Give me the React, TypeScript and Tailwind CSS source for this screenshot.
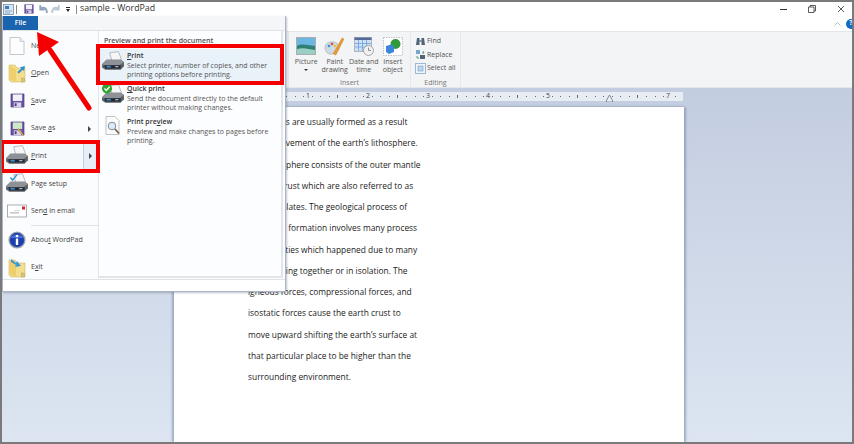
import type { ReactNode } from "react"

const docLines = [
  "Mountains are usually formed as a result",
  "of the movement of the earth’s lithosphere.",
  "The lithosphere consists of the outer mantle",
  "and the crust which are also referred to as",
  "tectonic plates. The geological process of",
  "mountain formation involves many process",
  "and activities which happened due to many",
  "forces acting together or in isolation. The",
  "igneous forces, compressional forces, and",
  "isostatic forces cause the earth crust to",
  "move upward shifting the earth’s surface at",
  "that particular place to be higher than the",
  "surrounding environment.",
]

function Floppy({ size = 16, pencil = false }: { size?: number; pencil?: boolean }) {
  return (
    <svg width={size} height={size} viewBox="0 0 16 16">
      <path d="M1 1h14v14H1z" fill="#6a4fa3" stroke="#4a3a80" strokeWidth="0.6" />
      <rect x="3" y="1.5" width="10" height="7" fill={pencil ? "#cfe8c8" : "#f1f1f8"} />
      <rect x="4" y="10" width="8" height="5" fill="#d8d4e8" />
      <rect x="5" y="11" width="2" height="3" fill="#4a3a80" />
      {pencil && <path d="M9 8l5.5 6.5-1.2.6L8 9z" fill="#e8b84a" stroke="#8a6a20" strokeWidth="0.4" />}
    </svg>
  )
}

function PrinterIcon({ check = false, paperCheck = false, size = 24 }: { check?: boolean; paperCheck?: boolean; size?: number }) {
  return (
    <svg width={size} height={size} viewBox="0 0 22 22">
      <path d="M8 2.5l8-1 3 8-9 1z" fill="#f6f6f6" stroke="#9a9a9a" strokeWidth="0.6" />
      <path d="M1 13l4-4h13l3 2v4l-3 3H4l-3-2z" fill="#5c6065" />
      <path d="M1 13l4-4h13l3 2-4 3H3z" fill="#8e9196" />
      <path d="M3 14h15v3H4z" fill="#24282d" />
      <rect x="5" y="14.5" width="4" height="1.6" fill="#3b8fd0" />
      <rect x="13" y="14.8" width="3" height="1" fill="#9fd0ef" />
      {check && (
        <g>
          <circle cx="5.5" cy="5" r="4.6" fill="#2ea52e" />
          <path d="M3.2 5l1.7 1.8 3-3.4" fill="none" stroke="#fff" strokeWidth="1.3" />
        </g>
      )}
      {paperCheck && <path d="M5 5l2 2.4 4-5" fill="none" stroke="#2a8fd0" strokeWidth="1.3" />}
    </svg>
  )
}

function FolderIcon({ exit = false }: { exit?: boolean }) {
  return (
    <svg width="19" height="20" viewBox="0 0 19 20">
      <path d="M1 2h6l2 3h8v14H3l-2-2z" fill="#f2de8c" stroke="#c6ad5a" strokeWidth="0.5" />
      <path d="M1 2l7 4v13l-5-2.5L1 15z" fill="#efcf6c" />
      {exit ? (
        <path d="M3 1l5 4 1-2 4 5-6 1 1-2-5-3z" fill="#3a9ad8" />
      ) : (
        <path d="M17 3l-5 1.2 1.3 1.2-4 3.6 1.5 1.4 4-3.7 1.2 1.3z" fill="#2f8fd6" />
      )}
      <rect x="13.5" y="15" width="3" height="4" fill="#d8c478" stroke="#b79f52" strokeWidth="0.4" />
    </svg>
  )
}

function NewDoc() {
  return (
    <svg width="16" height="18" viewBox="0 0 16 18">
      <path d="M1 .5h10l4 4v13H1z" fill="#fdfdfd" stroke="#b9b9b9" strokeWidth="0.8" />
      <path d="M11 .5v4h4" fill="#ececec" stroke="#b9b9b9" strokeWidth="0.6" />
    </svg>
  )
}

function MailIcon() {
  return (
    <svg width="20" height="14" viewBox="0 0 20 14">
      <rect x="0.5" y="1" width="19" height="12" fill="#fff" stroke="#9a9a9a" strokeWidth="0.8" />
      <rect x="3" y="8" width="9" height="1.6" fill="#c8c8c8" />
      <rect x="7" y="6" width="6" height="1.2" fill="#dedede" />
      <rect x="15" y="2.5" width="3" height="3" fill="#e0202a" />
    </svg>
  )
}

function InfoIcon() {
  return (
    <svg width="18" height="18" viewBox="0 0 18 18">
      <circle cx="9" cy="9" r="8.6" fill="#9ba1aa" />
      <circle cx="9" cy="9" r="7.2" fill="#1c3fae" />
      <path d="M2.5 7a7 5 0 0 1 13 0z" fill="#4a70d6" />
      <circle cx="9" cy="5" r="1.3" fill="#fff" />
      <rect x="7.8" y="7.4" width="2.4" height="6.6" rx="0.4" fill="#fff" />
    </svg>
  )
}

function PreviewIcon() {
  return (
    <svg width="16" height="20" viewBox="0 0 16 20">
      <path d="M1 .5h9l4 4v14H1z" fill="#fcfcfc" stroke="#a9a9a9" strokeWidth="0.7" />
      <circle cx="7" cy="10" r="3.8" fill="#dcecf7" stroke="#7f8a93" strokeWidth="1" />
      <path d="M10 13l4 4.5" stroke="#6a5a4a" strokeWidth="1.6" />
    </svg>
  )
}

function Caret() {
  return <span className="ml-auto mr-[7px] h-0 w-0 border-y-[3px] border-l-[3px] border-y-transparent border-l-[#444]" />
}

function MenuRow({ icon, children, arrow = false }: { icon: ReactNode; children: ReactNode; arrow?: boolean }) {
  return (
    <div className="flex h-[27.6px] shrink-0 items-center">
      <div className="flex w-[28px] shrink-0 justify-center">{icon}</div>
      <span className="whitespace-nowrap text-[7px] text-[#444]">{children}</span>
      {arrow && <Caret />}
    </div>
  )
}

function PanelItem({ icon, title, lines, active = false }: { icon: ReactNode; title: ReactNode; lines: string[]; active?: boolean }) {
  return (
    <div className={`flex h-[33px] items-start ${active ? "bg-[#e9f1f9]" : ""}`}>
      <div className="flex w-[28px] shrink-0 justify-center pt-[1px]">{icon}</div>
      <div className="pt-[2px] text-[7px] leading-[9.2px] text-[#555]">
        <div className="mb-[1px] font-semibold text-[#333]">{title}</div>
        {lines.map((l) => (
          <div key={l} className="whitespace-nowrap">{l}</div>
        ))}
      </div>
    </div>
  )
}

function FileMenu() {
  return (
    <div className="absolute left-0 top-[14px] flex h-[276px] w-[284px] flex-col border border-[#a9b4c6] border-t-0 bg-[#fbfcfd] shadow-[1px_1px_2px_rgba(70,80,100,0.35)]">
      <div className="flex h-[15px] shrink-0 border-b border-[#dfe3e8] bg-[#f5f6f8]">
        <div className="flex w-[35px] items-center justify-center bg-[#1a63ae] text-[7px] font-semibold text-white">File</div>
      </div>
      <div className="flex h-[248px] shrink-0">
        <div className="flex w-[95px] shrink-0 flex-col pt-[1px]">
          <MenuRow icon={<NewDoc />}>New</MenuRow>
          <MenuRow icon={<FolderIcon />}><u>O</u>pen</MenuRow>
          <MenuRow icon={<Floppy size={15} />}><u>S</u>ave</MenuRow>
          <MenuRow icon={<Floppy size={15} pencil />} arrow>Save <u>a</u>s</MenuRow>
          <div className="flex h-[27.6px] shrink-0 items-center bg-[#f6f9fc]">
            <div className="flex w-[28px] shrink-0 justify-center"><PrinterIcon /></div>
            <span className="text-[7px] text-[#444]"><u>P</u>rint</span>
            <div className="ml-auto mr-[2px] flex h-full w-[13px] items-center justify-center border-l border-[#bcd0e6] bg-[#e6eff8]">
              <span className="h-0 w-0 border-y-[3px] border-l-[3px] border-y-transparent border-l-[#444]" />
            </div>
          </div>
          <MenuRow icon={<PrinterIcon paperCheck />}>Pa<u>g</u>e setup</MenuRow>
          <MenuRow icon={<MailIcon />}>Sen<u>d</u> in email</MenuRow>
          <div className="ml-[28px] h-px shrink-0 bg-[#dde1e6]" />
          <MenuRow icon={<InfoIcon />}>Abou<u>t</u> WordPad</MenuRow>
          <MenuRow icon={<FolderIcon exit />}>E<u>x</u>it</MenuRow>
        </div>
        <div className="mb-[1px] flex w-[185px] shrink-0 flex-col border-b-2 border-l border-r-2 border-[#e3e5e8] bg-[#fcfdfe] pt-[5px]">
          <div className="h-[13px] pl-[5px] text-[7px] font-semibold leading-[10px] text-[#555]">Preview and print the document</div>
          <PanelItem
            active
            icon={<PrinterIcon />}
            title={<><u>P</u>rint</>}
            lines={["Select printer, number of copies, and other", "printing options before printing."]}
          />
          <PanelItem
            icon={<PrinterIcon check />}
            title={<><u>Q</u>uick print</>}
            lines={["Send the document directly to the default", "printer without making changes."]}
          />
          <PanelItem
            icon={<PreviewIcon />}
            title={<>Print pre<u>v</u>iew</>}
            lines={["Preview and make changes to pages before", "printing."]}
          />
        </div>
      </div>
      <div className="z-10 flex-1 border-t border-[#dfe3e8] bg-white" />
    </div>
  )
}

function InsertTool({ icon, label, drop = false }: { icon: ReactNode; label: string[]; drop?: boolean }) {
  return (
    <div className="flex w-[29.5px] flex-col items-center">
      <div className="flex h-[20px] items-center">{icon}</div>
      <div className="mt-[2px] text-center text-[7px] leading-[8.2px] text-[#555]">
        {label.map((l) => (
          <div key={l} className="whitespace-nowrap">{l}</div>
        ))}
        {drop && <span className="mx-auto mt-[3px] block h-0 w-0 border-x-[2px] border-t-[2px] border-x-transparent border-t-[#333]" />}
      </div>
    </div>
  )
}

function Ribbon() {
  return (
    <div className="flex h-[57px] shrink-0 border-y border-[#e4e6e9] bg-[#f3f4f6] pl-[286px]">
      <div className="flex w-[123px] flex-col border-x border-[#e6e8eb]">
        <div className="flex flex-1 px-[3px] pt-[4px]">
          <InsertTool
            drop
            label={["Picture"]}
            icon={
              <svg width="20" height="18" viewBox="0 0 20 18">
                <rect width="20" height="18" fill="#a9adb2" />
                <rect x="1" y="1" width="18" height="16" fill="#6ab8e2" />
                <path d="M1 9c5-3 9-1 18 0v8H1z" fill="#2f7f74" />
                <path d="M1 12c6-2 12 0 18 1v4H1z" fill="#9ad0c4" />
              </svg>
            }
          />
          <InsertTool
            label={["Paint", "drawing"]}
            icon={
              <svg width="21" height="20" viewBox="0 0 21 20">
                <path d="M1 12c0-5 5-7 9-6 5 1 6 5 4 8s-5 2-6 4c-3 1-7-2-7-6z" fill="#cfdbe4" stroke="#8d9aa6" strokeWidth="0.5" />
                <circle cx="5" cy="10" r="1.3" fill="#3a8fd0" />
                <circle cx="8" cy="8" r="1.3" fill="#e04a3a" />
                <circle cx="11" cy="10" r="1.3" fill="#e8c33a" />
                <path d="M9 18L18 2l2 1-8 16z" fill="#e89a30" stroke="#b06a10" strokeWidth="0.3" />
              </svg>
            }
          />
          <InsertTool
            label={["Date and", "time"]}
            icon={
              <svg width="20" height="19" viewBox="0 0 20 19">
                <rect x="0.5" y="0.5" width="17" height="14" fill="#cfe0f3" stroke="#8a93a0" strokeWidth="0.6" />
                <rect x="0.5" y="0.5" width="17" height="2.5" fill="#566a9a" />
                <path d="M4.5 3v11M8.5 3v11M12.5 3v11M1 6.5h16M1 10h16" stroke="#5f9ad8" strokeWidth="0.7" />
                <circle cx="14.5" cy="13.5" r="5" fill="#f1f1f1" stroke="#8a8a8a" strokeWidth="0.7" />
                <path d="M14.5 10.5v3h2.5" fill="none" stroke="#666" strokeWidth="0.7" />
              </svg>
            }
          />
          <InsertTool
            label={["Insert", "object"]}
            icon={
              <svg width="20" height="19" viewBox="0 0 20 19">
                <rect x="0.5" y="0.5" width="19" height="18" fill="#fff" stroke="#8a8a8a" strokeWidth="0.5" strokeDasharray="1.5 1" />
                <circle cx="12.5" cy="7" r="5" fill="#2f9a3a" />
                <path d="M3 9l5-1.5 3 1.5v6l-5 2-3-2z" fill="#3a86da" />
              </svg>
            }
          />
        </div>
        <div className="h-[8px] text-center text-[7px] leading-[8px] text-[#777]">Insert</div>
      </div>
      <div className="flex w-[50px] flex-col border-r border-[#e6e8eb]">
        <div className="flex flex-1 flex-col gap-[2px] pl-[4px] pt-[3px] text-[7px] leading-[11.7px] text-[#555]">
          <div className="flex items-center gap-[1px]">
            <svg width="11" height="10" viewBox="0 0 11 10">
              <path d="M1 9l1-7h2.5v7zM6.5 9V2H9l1 7z" fill="#4f6478" />
              <rect x="4" y="4" width="3" height="2" fill="#7f93a6" />
            </svg>
            Find
          </div>
          <div className="flex items-center gap-[1px]">
            <svg width="11" height="11" viewBox="0 0 11 11">
              <path d="M1 1h4v4H1z" fill="#7aa7d0" />
              <path d="M5 6h5v4H5z" fill="#4f6478" />
              <path d="M2 7v2h2M8 2l1 2H7" fill="none" stroke="#2f8f5a" strokeWidth="0.8" />
            </svg>
            Replace
          </div>
          <div className="flex items-center gap-[1px]">
            <svg width="11" height="11" viewBox="0 0 11 11">
              <rect x="0.5" y="0.5" width="10" height="10" fill="none" stroke="#3f7fc0" strokeDasharray="1 1" />
              <rect x="3" y="3" width="5" height="5" fill="#b9d5ef" stroke="#5b93cc" strokeWidth="0.5" />
            </svg>
            Select all
          </div>
        </div>
        <div className="h-[8px] text-center text-[7px] leading-[8px] text-[#777]">Editing</div>
      </div>
    </div>
  )
}

function Ruler() {
  return (
    <div className="relative ml-[171px] mt-[4px] flex h-[9px] w-[510px] shrink-0 bg-[#e8ecf3] pl-[75px]">
      {[0, 1, 2, 3, 4, 5, 6, 7].map((n) => (
        <div key={n} className={`relative flex h-full shrink-0 items-center justify-around ${n === 7 ? "w-[15px]" : "w-[60px]"}`}>
          {n > 0 && n !== 6 && (
            <span className="absolute left-[-2px] top-[-1px] text-[7px] leading-[10px] text-[#444]">{n}</span>
          )}
          {(n === 7 ? [0] : [0, 1, 2, 3, 4, 5, 6]).map((t) => (
            <span key={t} className={t === 3 ? "h-[3px] w-px bg-[#667]" : "h-px w-px bg-[#667]"} />
          ))}
        </div>
      ))}
      <svg className="absolute left-[433px] top-[2px]" width="7" height="8" viewBox="0 0 7 8">
        <path d="M3.5 1L6.5 6.5V8H.5V6.5z" fill="#eef1f6" stroke="#5c6f8c" strokeWidth="0.8" />
      </svg>
    </div>
  )
}

export default function App() {
  return (
    <div className="relative flex h-[444px] w-[854px] flex-col overflow-hidden border-2 border-[#7a7a7a] bg-white font-['Open_Sans',sans-serif]">
      <div className="flex h-[14px] shrink-0 items-center pl-[1px] text-[8.8px] text-[#333]">
        <svg width="11" height="11" viewBox="0 0 11 11">
          <rect x="0.5" y="0.5" width="10" height="10" fill="#d8e6f4" stroke="#5b83b0" strokeWidth="0.7" />
          <rect x="2" y="2" width="4" height="3" fill="#3a7fc0" />
          <path d="M2 7h7M2 9h5" stroke="#7a8a9a" strokeWidth="0.7" />
        </svg>
        <span className="mx-[2px] h-[9px] w-px bg-[#888]" />
        <span className="ml-[5px]"><Floppy size={10} /></span>
        <svg className="ml-[4px]" width="10" height="10" viewBox="0 0 9 9">
          <path d="M2 1v4h4M2 5c2-3 6-2 6 3" fill="none" stroke="#8fa4ba" strokeWidth="1.6" />
        </svg>
        <svg className="ml-[3px]" width="10" height="10" viewBox="0 0 9 9">
          <path d="M7 1v4H3M7 5C5 2 1 3 1 8" fill="none" stroke="#bcc8d4" strokeWidth="1.6" />
        </svg>
        <span className="ml-[5px] flex flex-col items-center gap-[1px]">
          <span className="h-px w-[4px] bg-[#222]" />
          <span className="h-0 w-0 border-x-[2.5px] border-t-[3px] border-x-transparent border-t-[#222]" />
        </span>
        <span className="ml-[6px] mr-[3px] h-[9px] w-px bg-[#888]" />
        <span>sample - WordPad</span>
        <div className="ml-auto flex items-center">
          <span className="h-px w-[7px] bg-[#333]" />
          <svg className="ml-[21px]" width="8" height="8" viewBox="0 0 8 8">
            <path d="M.5 2H6v5.500H.5zM2 2V.5h5.500V6H6" fill="none" stroke="#333" strokeWidth="0.8" />
          </svg>
          <svg className="ml-[21px] mr-[7px]" width="8" height="8" viewBox="0 0 8 8">
            <path d="M1 1l6 6M7 1L1 7" stroke="#333" strokeWidth="0.8" />
          </svg>
        </div>
      </div>
      <div className="flex h-[15px] shrink-0 items-center justify-end">
        <svg width="7" height="4" viewBox="0 0 7 4">
          <path d="M.5 3.5l3-3 3 3" fill="none" stroke="#a9a9a9" strokeWidth="0.8" />
        </svg>
        <span className="ml-[5px] mr-[-4px] flex h-[10px] w-[10px] items-center justify-center rounded-full bg-[#1669c4] text-[7px] font-bold text-white">?</span>
      </div>
      <Ribbon />
      <div className="flex flex-1 flex-col overflow-hidden bg-gradient-to-b from-[#c3cde0] to-[#dce5f1]">
        <Ruler />
        <div className="ml-[172px] mt-[6px] w-[510px] flex-1 bg-white pl-[74px] pt-[4px] text-[8.4px] leading-[21.25px] text-[#222] shadow-[-2px_0_2px_rgba(120,135,165,0.6),2px_0_2px_rgba(120,135,165,0.6)]">
          {docLines.map((l) => (
            <div key={l} className="whitespace-nowrap">{l}</div>
          ))}
        </div>
      </div>
      <FileMenu />
      {/* annotations */}
      <div className="absolute left-[94px] top-[42px] h-[41px] w-[188px] border-[4px] border-[#f50000]" />
      <div className="absolute left-[-2px] top-[138px] h-[33px] w-[100px] border-[4px] border-[#f50000]" />
      <svg className="absolute left-[-2px] top-[-2px]" width="100" height="115" viewBox="0 0 100 115">
        <path d="M89 108L50 50" stroke="#f50000" strokeWidth="5" strokeLinecap="round" />
        <path d="M37 32L59 42L39 56z" fill="#f50000" />
      </svg>
    </div>
  )
}
